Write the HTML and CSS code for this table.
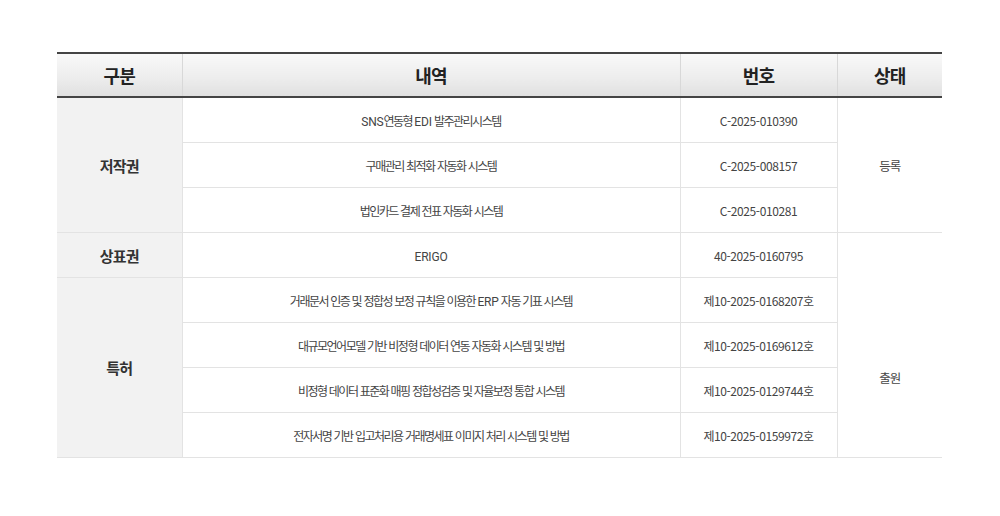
FILE: index.html
```html
<!DOCTYPE html>
<html lang="ko">
<head>
<meta charset="utf-8">
<link rel="stylesheet" href="styles.css">
</head>
<body>
<div class="wrap">
<table class="ip-table">
  <colgroup>
    <col class="c1"><col class="c2"><col class="c3"><col class="c4">
  </colgroup>
  <thead>
    <tr><th>구분</th><th>내역</th><th>번호</th><th>상태</th></tr>
  </thead>
  <tbody>
    <tr><td class="cat" rowspan="3">저작권</td><td><span class="en">SNS</span>연동형 <span class="en">EDI</span> 발주관리시스템</td><td class="num">C-2025-010390</td><td class="st" rowspan="3">등록</td></tr>
    <tr><td>구매관리 최적화 자동화 시스템</td><td class="num">C-2025-008157</td></tr>
    <tr><td>법인카드 결제 전표 자동화 시스템</td><td class="num">C-2025-010281</td></tr>
    <tr><td class="cat">상표권</td><td><span class="en">ERIGO</span></td><td class="num">40-2025-0160795</td><td class="st st-low" rowspan="5">출원</td></tr>
    <tr><td class="cat" rowspan="4">특허</td><td>거래문서 인증 및 정합성 보정 규칙을 이용한 <span class="en">ERP</span> 자동 기표 시스템</td><td class="num">제10-2025-0168207호</td></tr>
    <tr><td>대규모언어모델 기반 비정형 데이터 연동 자동화 시스템 및 방법</td><td class="num">제10-2025-0169612호</td></tr>
    <tr><td>비정형 데이터 표준화 매핑 정합성검증 및 자율보정 통합 시스템</td><td class="num">제10-2025-0129744호</td></tr>
    <tr><td>전자서명 기반 입고처리용 거래명세표 이미지 처리 시스템 및 방법</td><td class="num">제10-2025-0159972호</td></tr>
  </tbody>
</table>
</div>
</body>
</html>
```
FILE: styles.css
```css
html, body {
  margin: 0;
  padding: 0;
  background: #fff;
}
body {
  font-family: "Noto Sans CJK KR", "Noto Sans", sans-serif;
  color: #444;
}
.wrap {
  padding: 52px 57px 0 57px;
}
.ip-table {
  width: 885px;
  border-collapse: collapse;
  table-layout: fixed;
}
.c1 { width: 125px; }
.c2 { width: 498px; }
.c3 { width: 157px; }
.c4 { width: 105px; }
.ip-table thead th {
  height: 42px;
  padding: 0;
  font-size: 18px;
  font-weight: 700;
  letter-spacing: -0.8px;
  color: #222;
  background: linear-gradient(to bottom, #f9f9f9 0%, #ececec 60%, #e0e0e0 100%);
  border-top: 2px solid #444;
  border-bottom: 2px solid #444;
  border-left: 1px solid #d8d8d8;
  text-align: center;
  vertical-align: middle;
}
.ip-table thead th:first-child { border-left: none; }
.ip-table tbody td {
  height: 44px;
  padding: 0;
  font-size: 12px;
  letter-spacing: -1.5px;
  word-spacing: 0.4px;
  color: #444;
  text-align: center;
  vertical-align: middle;
  border-bottom: 1px solid #e3e3e3;
  border-left: 1px solid #e3e3e3;
}
.ip-table tbody td .en {
  font-family: Roboto, "Noto Sans", sans-serif;
  letter-spacing: -0.2px;
}
.ip-table tbody td.num {
  letter-spacing: -0.4px;
  word-spacing: 0;
}
.ip-table tbody td.cat {
  background: #f2f2f2;
  border-left: none;
  font-size: 15px;
  font-weight: 700;
  letter-spacing: -0.8px;
  color: #333;
}
.ip-table tbody td.st {
  font-size: 12.5px;
  letter-spacing: -1px;
}
.ip-table tbody td.st-low {
  padding-top: 64px;
}
```
